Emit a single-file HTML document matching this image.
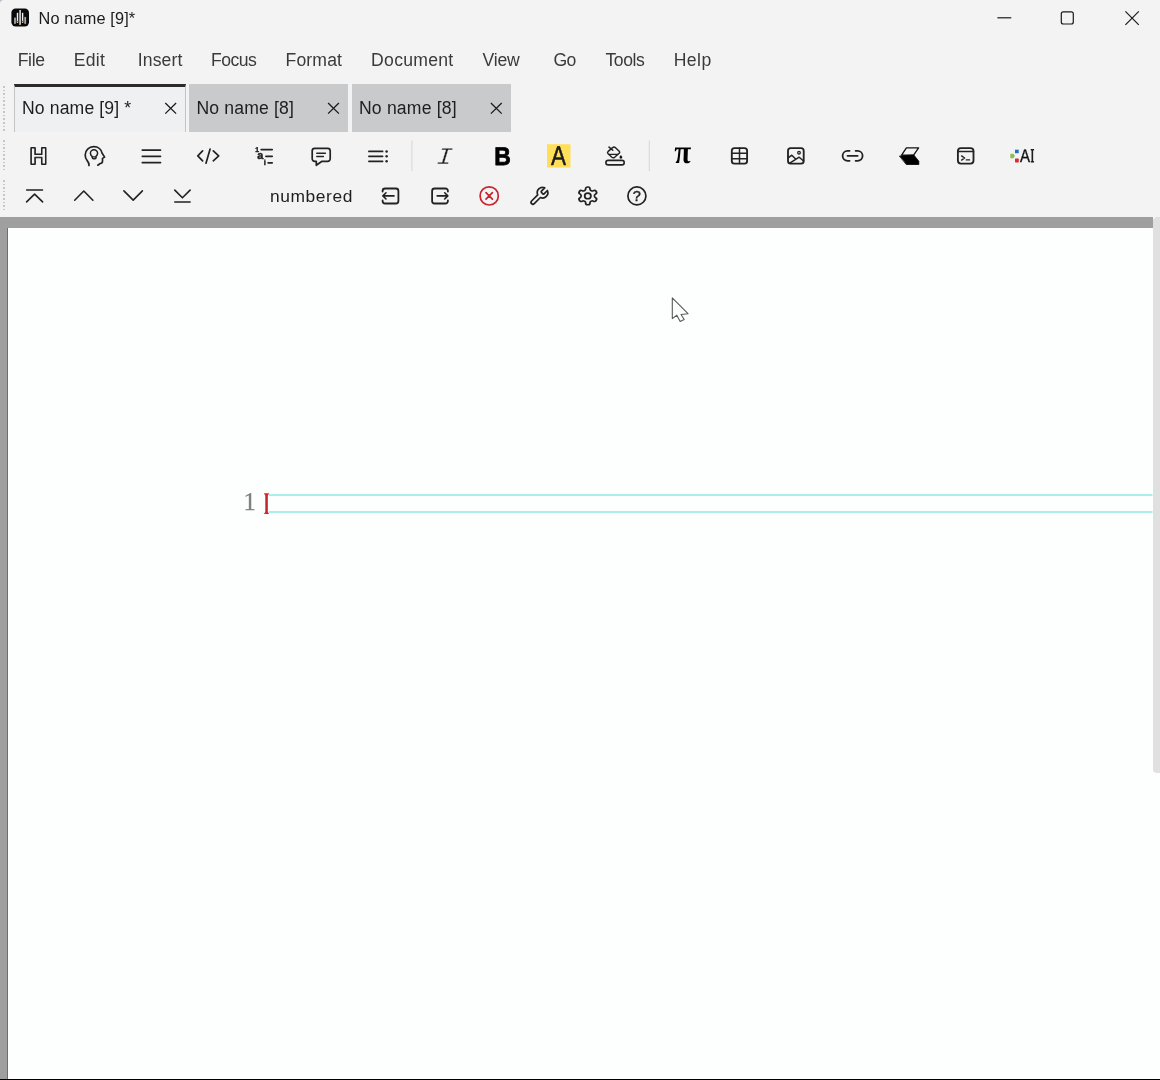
<!DOCTYPE html>
<html><head><meta charset="utf-8"><title>No name [9]*</title>
<style>
html,body{margin:0;padding:0;}
body{width:1160px;height:1080px;position:relative;overflow:hidden;background:#f3f3f3;font-family:"Liberation Sans",sans-serif;color:#1b1b1b;}
.t{position:absolute;white-space:pre;line-height:1;}
#txt{position:absolute;left:0;top:0;width:1160px;height:230px;will-change:transform;}
.m{color:#3a3a3a;}
.tb{color:#1e1e1e;}
.nb{color:#1e1e1e;}
#page{position:absolute;left:0;top:217px;width:1153px;height:863px;background:#9f9f9f;}
#rs{position:absolute;left:1153px;top:217px;width:7px;height:863px;background:#fdfffe;}
#paper{position:absolute;left:7px;top:11px;width:1153px;height:851px;background:#fdfffe;border-left:1px solid #6e6e6e;box-sizing:border-box;}
#bottom{position:absolute;left:0;top:1079px;width:1160px;height:1px;background:#000;}
#sb{position:absolute;left:1153px;top:217px;width:10px;height:556px;background:#e0e0e0;border-radius:4px 0 0 4px;}
.tab{position:absolute;top:84px;height:48px;background:#c9cacb;}
#tab1{left:14px;width:172px;top:84px;background:#eef0f1;box-sizing:border-box;border-top:3px solid #2a2a2a;border-left:1px solid #c4c4c4;border-right:1px solid #c4c4c4;}
.grip{position:absolute;left:3px;width:2px;background:repeating-linear-gradient(to bottom,#c6c6c6 0,#c6c6c6 1.6px,transparent 1.6px,transparent 3.6px);}
svg{position:absolute;left:0;top:0;}
</style></head><body>
<div class="tab" id="tab1"></div>
<div class="tab" style="left:189px;width:159px;"></div>
<div class="tab" style="left:351.5px;width:159px;"></div>
<div class="grip" style="top:85.5px;height:46px;"></div>
<div class="grip" style="top:139.5px;height:32px;"></div>
<div class="grip" style="top:179.5px;height:32px;"></div>
<div id="txt">
<div class="t title" style="left:38.54px;top:6.00px;font-size:16.3px;line-height:24px;letter-spacing:0.148px;">No name [9]*</div>
<div class="t m" style="left:17.72px;top:48.00px;font-size:17.6px;line-height:24px;letter-spacing:-0.368px;">File</div>
<div class="t m" style="left:73.69px;top:48.00px;font-size:17.6px;line-height:24px;letter-spacing:0.321px;">Edit</div>
<div class="t m" style="left:137.77px;top:48.00px;font-size:17.6px;line-height:24px;letter-spacing:0.115px;">Insert</div>
<div class="t m" style="left:211.11px;top:48.00px;font-size:17.6px;line-height:24px;letter-spacing:-0.573px;">Focus</div>
<div class="t m" style="left:285.51px;top:48.00px;font-size:17.6px;line-height:24px;letter-spacing:0.149px;">Format</div>
<div class="t m" style="left:371.11px;top:48.00px;font-size:17.6px;line-height:24px;letter-spacing:0.273px;">Document</div>
<div class="t m" style="left:482.62px;top:48.00px;font-size:17.6px;line-height:24px;letter-spacing:-0.243px;">View</div>
<div class="t m" style="left:553.39px;top:48.00px;font-size:17.6px;line-height:24px;letter-spacing:-0.621px;">Go</div>
<div class="t m" style="left:605.50px;top:48.00px;font-size:17.6px;line-height:24px;letter-spacing:-0.441px;">Tools</div>
<div class="t m" style="left:673.69px;top:48.00px;font-size:17.6px;line-height:24px;letter-spacing:0.444px;">Help</div>
<div class="t tb" style="left:21.99px;top:96.00px;font-size:17.6px;line-height:24px;letter-spacing:0.134px;">No name [9] *</div>
<div class="t tb" style="left:196.41px;top:96.00px;font-size:17.6px;line-height:24px;letter-spacing:0.166px;">No name [8]</div>
<div class="t tb" style="left:358.99px;top:96.00px;font-size:17.6px;line-height:24px;letter-spacing:0.176px;">No name [8]</div>
<div class="t nb" style="left:269.93px;top:184.00px;font-size:17.4px;line-height:24px;letter-spacing:0.582px;">numbered</div>
</div>
<div id="page"><div id="paper"></div></div>
<div id="rs"></div>
<div id="sb"></div>
<div id="bottom"></div>
<div id="txt2" style="position:absolute;left:230px;top:480px;width:40px;height:40px;will-change:transform;"><div class="t" id="one" style="left:13.6px;top:10.2px;font-family:'Liberation Serif',serif;font-size:24.7px;color:#808080;-webkit-text-stroke:.25px #808080;">1</div></div>
<svg id="ic" text-rendering="geometricPrecision" width="1160" height="1080" viewBox="0 0 1160 1080" fill="none" stroke="#222" stroke-width="1.7" stroke-linecap="round" stroke-linejoin="round">
<path id="corner" d="M0 0H3.6A3.6 3.6 0 0 0 0 3.6Z" fill="#a9b8c7" stroke="none"/>
<!-- app icon -->
<g stroke="none">
<rect x="11.4" y="8.4" width="17.6" height="18.1" rx="4.2" fill="#0a0a0a"/>
<rect x="14.1" y="17.6" width="1.8" height="6.2" fill="#a8a8a8"/>
<rect x="16.8" y="12.8" width="1.4" height="10" fill="#f4f4f4"/>
<rect x="19.2" y="10" width="1.8" height="14.8" fill="#c4c4c4"/>
<rect x="21.9" y="12.8" width="1.4" height="10" fill="#f4f4f4"/>
<rect x="24.3" y="16.9" width="1.8" height="6.9" fill="#a8a8a8"/>
<rect x="16.7" y="20.8" width="1.4" height="1.2" fill="#4a86d8"/>
<rect x="21.9" y="20.8" width="1.4" height="1.2" fill="#e0383e"/>
<rect x="19.5" y="23.8" width="1.2" height="1" fill="#e09a3a"/>
</g>
<!-- window controls -->
<g stroke="#1a1a1a" stroke-width="1.2" stroke-linecap="butt">
<path d="M997.4 17.8H1011.3"/>
<rect x="1061.3" y="11.8" width="12" height="12.2" rx="2"/>
<path d="M1125.4 11.4L1138.8 24.8M1138.8 11.4L1125.4 24.8"/>
</g>
<!-- tab close -->
<g stroke="#1a1a1a" stroke-width="1.3" stroke-linecap="butt">
<path d="M165.3 103L176.1 113.6M176.1 103L165.3 113.6"/>
<path d="M328.1 103L338.9 113.6M338.9 103L328.1 113.6"/>
<path d="M490.9 103L501.7 113.6M501.7 103L490.9 113.6"/>
</g>
<!-- toolbar 1 -->
<g transform="translate(38.4 163.9) scale(1.035 1) translate(-38.4 -163.9)" font-family="'Liberation Sans', sans-serif" font-weight="bold" font-size="23.2" text-anchor="middle">
<text x="38.4" y="163.9" fill="#222" stroke="#222" stroke-width="2">H</text>
<text x="38.4" y="163.9" fill="#f3f3f3" stroke="#222" stroke-width="1">H</text>
</g>
<g id="head">
<path d="M89 165.4C89 163.5 88.4 162 87.2 160.6C85.7 158.9 85.2 157 85.2 154.9C85.2 150.2 88.9 146.7 93.7 146.7C98.4 146.7 101.5 149.6 102 153L104.6 157.1L102.5 158.4V161.3C102.5 162.7 101.6 163.5 100.2 163.5L97.8 165.2"/>
<path d="M92 156.4C90.9 155.5 90.4 154.4 90.4 153.3a3.6 3.6 0 0 1 7.2 0c0 1.1-.5 2.2-1.6 3.1v1.3a1 1 0 0 1-1 1h-1.6a1 1 0 0 1-1-1z" stroke-width="1.5"/>
<path d="M92.3 156.9h3.4" stroke-width="1.2"/>
</g>
<path d="M142.3 150.1H160.5M142.3 156.3H160.5M142.3 162.6H160.5"/>
<path d="M202.6 150.9L197.8 155.9L202.6 160.8M210.1 149L206 163.2M213.3 150.9L218.7 155.9L213.3 160.8"/>
<g id="list">
<path d="M261.2 149.6H272.2M265.9 156.3H272.2M268.1 162.8H272.2"/>
<g stroke="#222" stroke-width=".45" fill="#222" style="font-family:'Liberation Sans',sans-serif;font-weight:bold">
<text x="255.3" y="151.8" font-size="6.8">1</text>
<text x="257.3" y="159" font-size="11">a</text>
<text x="263.8" y="165.2" font-size="7.4">i</text>
</g></g>
<g id="comment">
<path d="M314.7 161.3a2.5 2.5 0 0 1-2.5-2.5v-8a2.5 2.5 0 0 1 2.5-2.5h13a2.5 2.5 0 0 1 2.5 2.5v8a2.5 2.5 0 0 1-2.5 2.5h-5.7l-5.7 4v-4z"/>
<path d="M316.8 153.3H325.4M316.8 156.6H323.4" stroke-width="1.5"/>
</g>
<g id="listdots">
<path d="M368.9 151.4H382.6M368.9 156.3H382.6M368.9 161.3H382.6"/>
<g fill="#222" stroke="none"><circle cx="386.6" cy="151.4" r="1.25"/><circle cx="386.6" cy="156.3" r="1.25"/><circle cx="386.6" cy="161.3" r="1.25"/></g>
</g>
<path d="M411.9 140.6V171.2M649.3 140.6V171.2" stroke="#dcdcdc" stroke-width="1.3" stroke-linecap="butt"/>
<text id="ital" x="444.8" y="163.9" text-anchor="middle" font-family="'Liberation Mono', monospace" font-style="italic" font-size="24" fill="#222" stroke="#f3f3f3" stroke-width="0.35" transform="translate(444.8 156) skewX(-5) scale(1.12 1) translate(-444.8 -156)">I</text>
<text id="bold" x="502.5" y="165.2" text-anchor="middle" font-family="'Liberation Sans', sans-serif" font-weight="bold" font-size="25.5" fill="#000" stroke="#000" stroke-width="0.8" transform="translate(502.5 0) scale(0.9 1) translate(-502.5 0)">B</text>
<rect x="547" y="144.2" width="23.5" height="23.3" fill="#ffdf5a" stroke="none"/>
<text id="hl" x="558.6" y="164.9" text-anchor="middle" font-family="'Liberation Sans', sans-serif" font-size="27.1" fill="#1a1a1a" stroke="#1a1a1a" stroke-width=".5" transform="translate(558.6 0) scale(0.83 1) translate(-558.6 0)">A</text>
<g id="bucket">
<path d="M612.6 147.6Q614.1 146.4 615.5 147.7L619.2 151.2Q620.2 152.2 619.2 153.2L614.6 157.3Q613.2 158.4 611.9 157.3L608.1 153.7Q607 152.5 608.2 151.4Z" stroke-width="1.5"/>
<path d="M609 147.1L612.8 150.3" stroke-width="1.5"/>
<path d="M609.3 154.4H617.6" stroke-width="1.4"/>
<path d="M620.9 155.1C621.6 156 622.3 156.6 622.3 157.3a1.4 1.4 0 0 1-2.8 0C619.5 156.6 620.2 156 620.9 155.1Z" fill="#111" stroke="none"/>
<rect x="605.9" y="160.4" width="18.3" height="4.5" rx="2.25" stroke-width="1.6"/>
</g>
<text id="pi" x="682.5" y="163.3" text-anchor="middle" font-family="'Liberation Serif', serif" font-weight="bold" font-style="italic" font-size="34" fill="#000" stroke="none" transform="translate(683.8 163.3) skewX(7) scale(0.9 1) translate(-682.5 -163.3)">π</text>
<g id="table">
<rect x="731.8" y="148.1" width="15.3" height="15.5" rx="2.6" stroke-width="1.85"/>
<path d="M739.5 148.1V163.6M731.8 153.3H747.1M731.8 158.7H747.1" stroke-width="1.5"/>
</g>
<g id="image">
<rect x="788" y="148.1" width="15.7" height="15.5" rx="2.6" stroke-width="1.85"/>
<circle cx="799" cy="152.7" r="1.3" stroke-width="1.3"/>
<path d="M788.2 157.8L791.8 155.2L795.4 158.8M789.8 163.2L799.2 157.2L803.6 161" stroke-width="1.5"/>
</g>
<g id="link" transform="translate(840.6 143.8)" stroke-width="1.8">
<path d="M9 17H7A5 5 0 0 1 7 7h2M15 7h2a5 5 0 1 1 0 10h-2M6.9 12h10.2"/>
</g>
<g id="eraser">
<path d="M906.4 147.8H918.6L913.6 155.2H901.6Z" stroke-width="1.3" stroke="#111"/>
<path d="M899.8 156L913.8 155L918.8 161.2V164.5H906.6Z" fill="#000" stroke="#000" stroke-width="0.8"/>
</g>
<g id="term">
<rect x="957.9" y="148.1" width="15.6" height="15.5" rx="3" stroke-width="1.85"/>
<path d="M957.9 151.6H973.5" stroke-width="1.5"/>
<path d="M961.6 155.9L964.6 158L961.6 160.1M966.3 159.9H969.6" stroke-width="1.4"/>
</g>
<g id="ai" stroke="none">
<rect x="1015" y="149.7" width="3.7" height="3.5" fill="#1f6fc0"/>
<path d="M1010.3 153.8H1013.4L1014.9 156L1013.4 158.3H1010.3Z" fill="#8cbf4f"/>
<rect x="1015" y="158.5" width="3.8" height="3.9" rx=".6" fill="#e2262c"/>
<text x="1020" y="162.1" fill="#111" transform="translate(1020 0) scale(0.82 1) translate(-1020 0)"><tspan font-family="'Liberation Sans', sans-serif" font-size="18.3" stroke="#111" stroke-width=".35">A</tspan><tspan font-family="'Liberation Serif', serif" font-size="19.2" dx="0.6" stroke="#111" stroke-width=".75" textLength="4.6" lengthAdjust="spacingAndGlyphs">I</tspan></text>
</g>
<!-- toolbar 2 -->
<g stroke-width="1.6">
<path d="M26.7 190H42.5M26.6 201.9L34.6 194.1L42.6 201.9"/>
<path d="M74.7 200.2L83.8 191L92.9 200.2"/>
<path d="M123.9 190.9L133.2 200.1L142.4 190.9"/>
<path d="M174.8 190.1L182.4 197.8L190.1 190.1M174.8 202H190.1"/>
</g>
<g id="boxl" stroke-width="1.8">
<path d="M382.6 191.6v-.6a2.5 2.5 0 0 1 2.5-2.5h10.8a2.5 2.5 0 0 1 2.5 2.5v10a2.5 2.5 0 0 1-2.5 2.5h-10.8a2.5 2.5 0 0 1-2.5-2.5v-.6"/>
<path d="M394 195.9H383M386 192.8L382.9 195.9L386 199" stroke-width="1.6"/>
</g>
<g id="boxr" stroke-width="1.8">
<path d="M447.9 191.6v-.6a2.5 2.5 0 0 0-2.5-2.5h-10.8a2.5 2.5 0 0 0-2.5 2.5v10a2.5 2.5 0 0 0 2.5 2.5h10.8a2.5 2.5 0 0 0 2.5-2.5v-.6"/>
<path d="M437.2 195.9H447.7M444.7 192.8L447.8 195.9L444.7 199" stroke-width="1.6"/>
</g>
<g id="redx" stroke="#c8242b">
<circle cx="489.2" cy="195.9" r="9.1"/>
<path d="M486 192.7L492.4 199.1M492.4 192.7L486 199.1"/>
</g>
<g id="wrench" transform="translate(528.4 185.6) scale(0.885)" stroke-width="1.9">
<path d="M14.7 6.3a1 1 0 0 0 0 1.4l1.6 1.6a1 1 0 0 0 1.4 0l3.77-3.77a6 6 0 0 1-7.94 7.94l-6.91 6.91a2.12 2.12 0 0 1-3-3l6.91-6.91a6 6 0 0 1 7.94-7.94l-3.76 3.76z"/>
</g>
<g id="gear" transform="translate(587.8 195.9) scale(0.97 0.89) translate(-12 -12)" stroke-width="1.85">
<path d="M12.22 2h-.44a2 2 0 0 0-2 2v.18a2 2 0 0 1-1 1.73l-.43.25a2 2 0 0 1-2 0l-.15-.08a2 2 0 0 0-2.73.73l-.22.38a2 2 0 0 0 .73 2.73l.15.1a2 2 0 0 1 1 1.72v.51a2 2 0 0 1-1 1.74l-.15.09a2 2 0 0 0-.73 2.73l.22.38a2 2 0 0 0 2.73.73l.15-.08a2 2 0 0 1 2 0l.43.25a2 2 0 0 1 1 1.73V20a2 2 0 0 0 2 2h.44a2 2 0 0 0 2-2v-.18a2 2 0 0 1 1-1.73l.43-.25a2 2 0 0 1 2 0l.15.08a2 2 0 0 0 2.73-.73l.22-.39a2 2 0 0 0-.73-2.73l-.15-.08a2 2 0 0 1-1-1.74v-.5a2 2 0 0 1 1-1.74l.15-.09a2 2 0 0 0 .73-2.73l-.22-.38a2 2 0 0 0-2.73-.73l-.15.08a2 2 0 0 1-2 0l-.43-.25a2 2 0 0 1-1-1.73V4a2 2 0 0 0-2-2z"/>
<circle cx="12" cy="12" r="3.2"/>
</g>
<g id="help">
<circle cx="636.9" cy="195.9" r="9"/>
<text x="636.9" y="201.2" text-anchor="middle" font-family="Liberation Sans, sans-serif" font-size="14.5" fill="#222" stroke="#222" stroke-width=".45">?</text>
</g>
<!-- document -->
<path d="M269 495H1152.5M269 512H1152.5" stroke="#8fe7e7" stroke-width="1.7" stroke-linecap="butt"/>
<g stroke="none"><rect x="265.3" y="494" width="2.5" height="19.4" fill="#bf262c"/><path d="M263.8 493.3H269.2L267.8 495.4H265.3Z" fill="#e0232a"/><path d="M263.8 514.1H269.2L267.8 512H265.3Z" fill="#e0232a"/></g>
<path d="M672.3 297.8V318.6L676.8 315.2L680.2 321.5L684.2 319.5L681 314.5L688 313.7Z" fill="#fdfffe" stroke="#5a5a5a" stroke-width="1.1"/>

</svg>
</body></html>
